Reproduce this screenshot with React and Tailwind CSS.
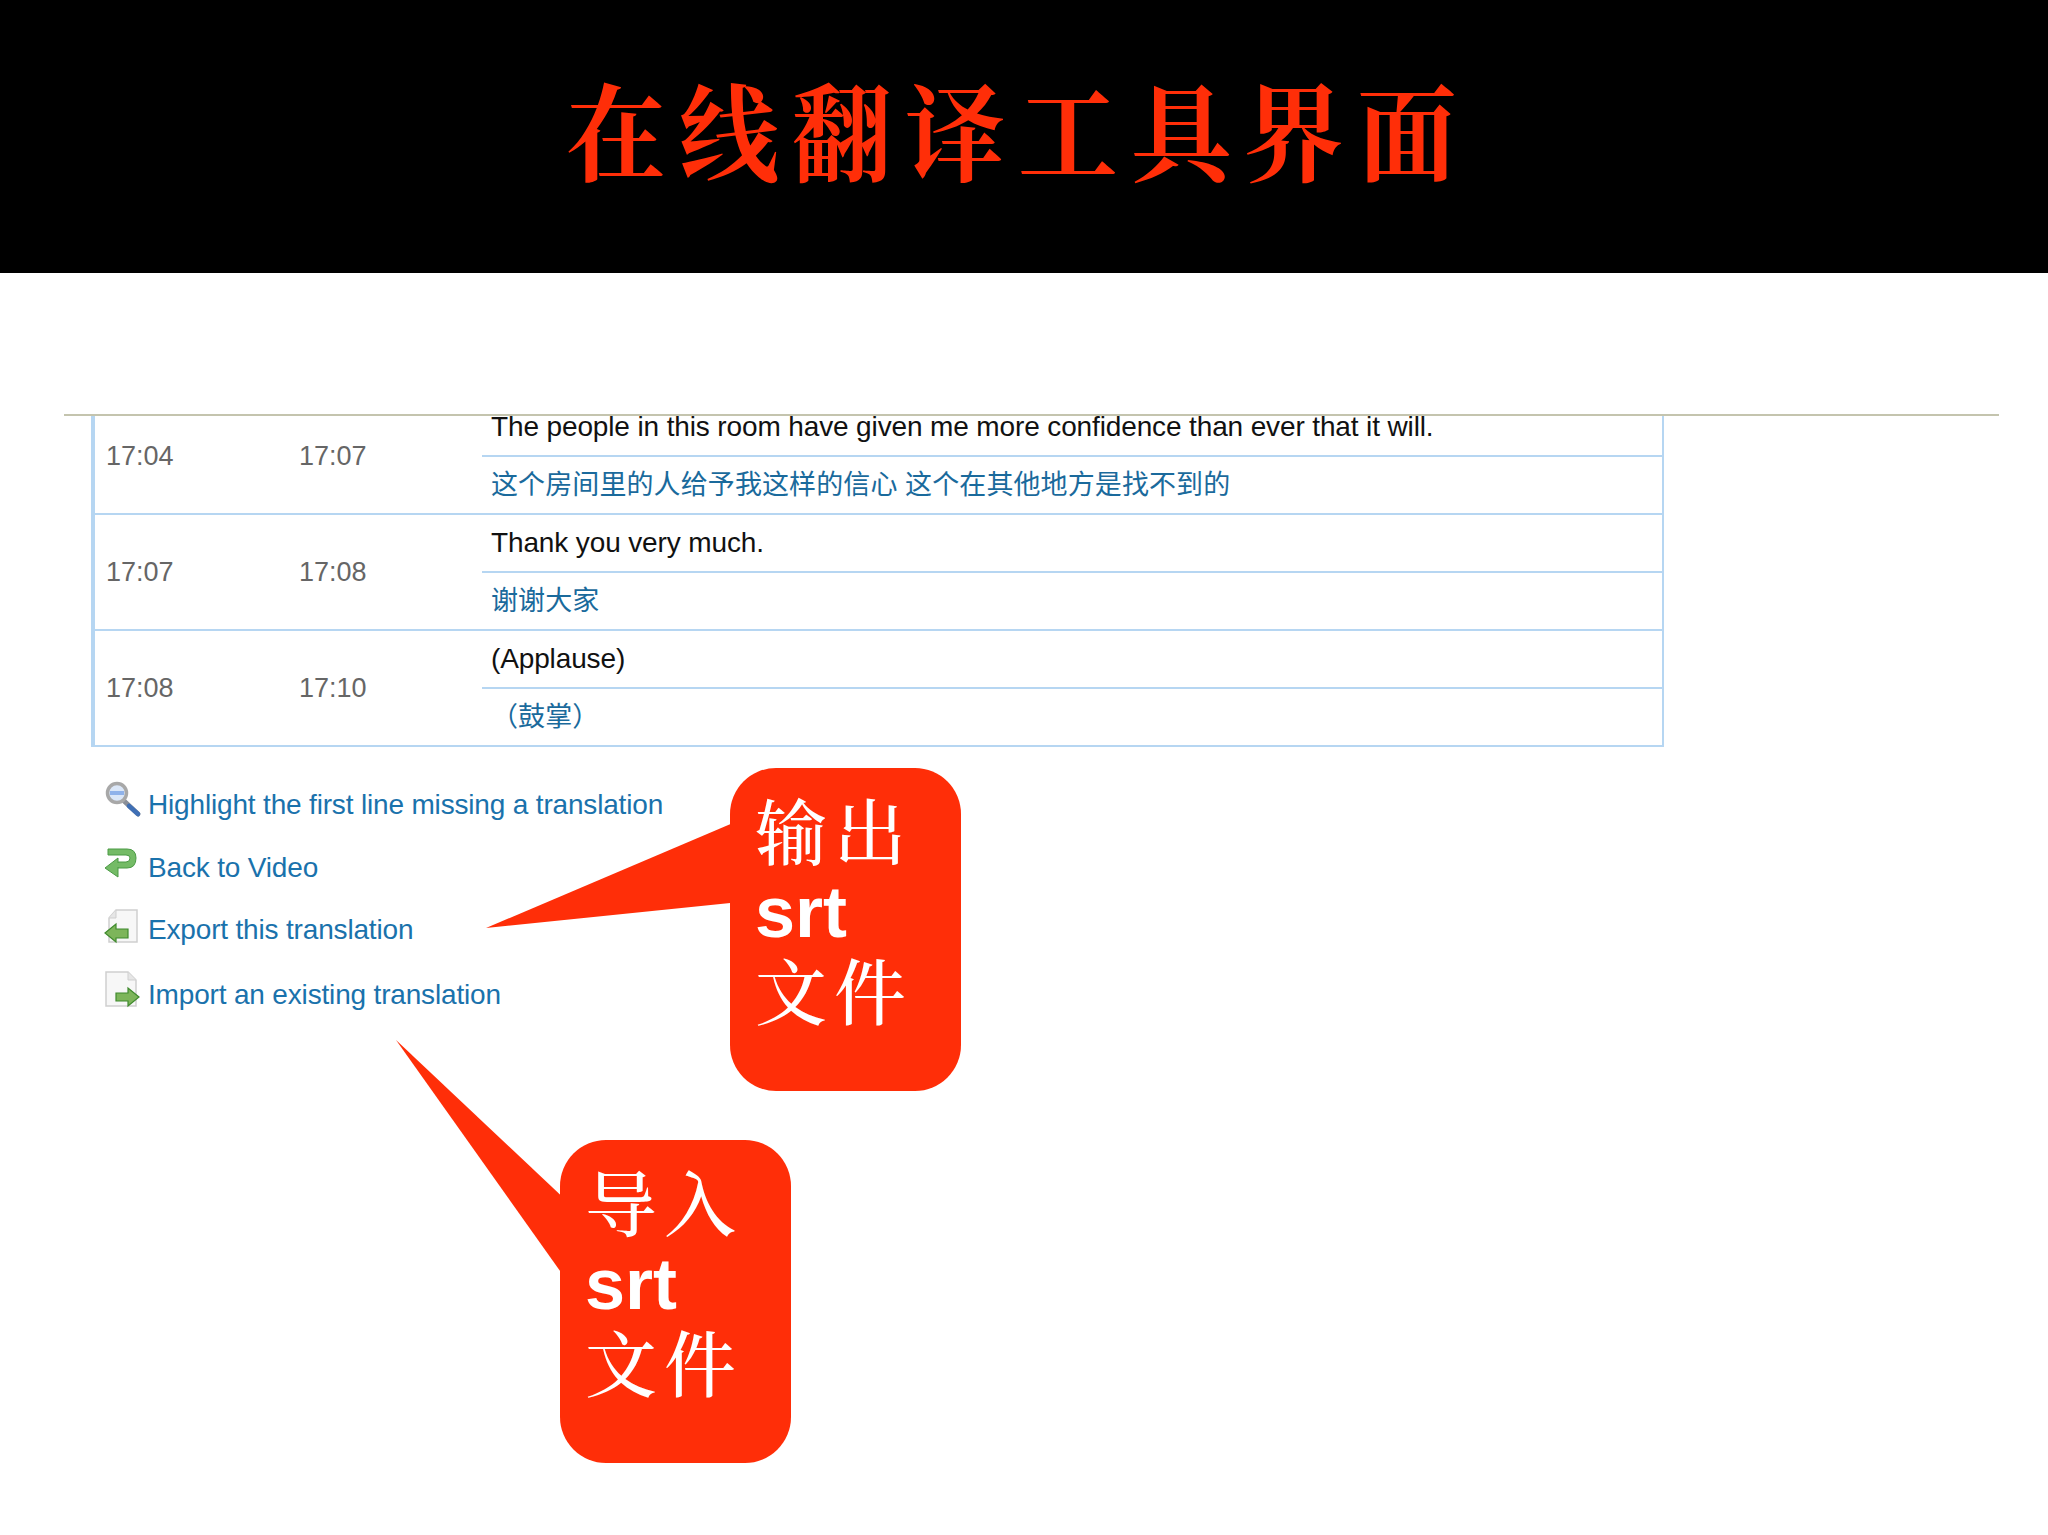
const sans = { fontFamily: '"Liberation Sans", Arial, sans-serif' };
const cjk = '"Liberation Sans", "Noto Sans CJK SC", sans-serif';
const serif = '"Noto Serif CJK SC", "Noto Sans CJK SC", serif';

const rows = [
  { a: "17:04", b: "17:07", en: "The people in this room have given me more confidence than ever that it will.", zh: "这个房间里的人给予我这样的信心 这个在其他地方是找不到的", h: "h-[116px]", line: true },
  { a: "17:07", b: "17:08", en: "Thank you very much.", zh: "谢谢大家", h: "h-[116px]", line: true },
  { a: "17:08", b: "17:10", en: "(Applause)", zh: "（鼓掌）", h: "h-[114px]", line: false },
];

function IconSearch() {
  return (
    <svg width="38" height="38" viewBox="0 0 38 38">
      <line x1="19" y1="19" x2="34" y2="33" stroke="#8a8f98" strokeWidth="5" strokeLinecap="round" />
      <line x1="25" y1="25" x2="34" y2="33" stroke="#3f6fb5" strokeWidth="4.5" strokeLinecap="round" />
      <circle cx="13" cy="12" r="9.5" fill="#dbe7f8" stroke="#a8a8a8" strokeWidth="3.5" />
      <rect x="6" y="10" width="14" height="4" fill="#8fb2ea" />
    </svg>
  );
}
function IconBack() {
  return (
    <svg width="34" height="34" viewBox="0 0 34 34">
      <path d="M4 1 H23 Q32 1 32 10 Q32 20 23 20 H13 V14 H22 Q26 14 26 10 Q26 7 22 7 H4 Z" fill="#74bb66" stroke="#4b9a45" strokeWidth="1" />
      <path d="M1 20 L14 10 V29 Z" fill="#74bb66" stroke="#4b9a45" strokeWidth="1" />
      <rect x="12" y="15" width="8" height="4" fill="#74bb66" />
    </svg>
  );
}
function IconExport() {
  return (
    <svg width="36" height="38" viewBox="0 0 36 38">
      <path d="M12 2 H33 V34 H5 V10 Z" fill="#f7f7f7" stroke="#cfcfcf" strokeWidth="1.5" />
      <path d="M12 2 V10 H5" fill="#e6e6e6" stroke="#cfcfcf" strokeWidth="1" />
      <path d="M1 25 L12 16 V21 H24 V30 H12 V34 Z" fill="#7db55a" stroke="#3f8a2d" strokeWidth="1.2" />
    </svg>
  );
}
function IconImport() {
  return (
    <svg width="36" height="40" viewBox="0 0 36 40">
      <path d="M2 2 H24 L32 10 V36 H2 Z" fill="#f7f7f7" stroke="#cfcfcf" strokeWidth="1.5" />
      <path d="M24 2 V10 H32" fill="#e6e6e6" stroke="#cfcfcf" strokeWidth="1" />
      <path d="M35 27 L24 18 V23 H12 V31 H24 V36 Z" fill="#7db55a" stroke="#3f8a2d" strokeWidth="1.2" />
    </svg>
  );
}

const links = [
  { icon: <IconSearch />, label: "Highlight the first line missing a translation", box: "h-[64px]", iconBox: "-translate-y-[5px]" },
  { icon: <IconBack />, label: "Back to Video", box: "h-[62px]", iconBox: "-translate-y-[3px]" },
  { icon: <IconExport />, label: "Export this translation", box: "h-[62px]", iconBox: "-translate-y-[3px]" },
  { icon: <IconImport />, label: "Import an existing translation", box: "h-[68px]", iconBox: "-translate-y-[5px]" },
];

function Callout({ box, lines }) {
  return (
    <div className={"absolute w-[231px] h-[323px] bg-[#ff2e08] rounded-[46px] pl-[25px] pt-[20px] text-white " + box}>
      {lines.map((l, i) =>
        i === 1 ? (
          <div key={i} className="h-[80px] leading-[80px] text-[72px] font-bold translate-y-[4px]" style={sans}>{l}</div>
        ) : (
          <div key={i} className="h-[80px] leading-[80px] text-[72px] font-medium tracking-[7px] whitespace-nowrap" style={{ fontFamily: serif }}>{l}</div>
        )
      )}
    </div>
  );
}

export default function App() {
  return (
    <div className="relative w-[2048px] h-[1535px] overflow-hidden bg-white" style={sans}>
      <header className="h-[273px] bg-black flex items-start justify-center">
        <h1
          className="mt-[55px] -ml-[12px] text-[100px] leading-[136px] font-bold tracking-[13px] text-[#ff2e08] whitespace-nowrap scale-y-[1.06] origin-top"
          style={{ fontFamily: serif }}
        >
          在线翻译工具界面
        </h1>
      </header>

      <div className="mt-[141px] ml-[64px] w-[1935px] h-[2px] bg-[#c4c4ae]" />

      <div className="ml-[91px] w-[1573px] h-[331px] overflow-hidden flex flex-col justify-end border-l-[4px] border-r-2 border-b-2 border-[#b6d6f2]">
        {rows.map((r, i) => (
          <div key={i} className={"flex shrink-0 " + r.h + " " + (r.line ? "border-b-2 border-[#b6d6f2]" : "")}>
            <div className="w-[204px] pl-[11px] flex items-center text-[27px] text-[#666]">{r.a}</div>
            <div className="w-[183px] flex items-center text-[27px] text-[#666]">{r.b}</div>
            <div className="flex-1 flex flex-col">
              <div className="flex-1 flex items-center pl-[9px] border-b-2 border-[#b6d6f2] text-[28px] tracking-[-0.13px] text-[#111] whitespace-nowrap">{r.en}</div>
              <div className="flex-1 flex items-center pl-[9px] text-[27px] tracking-[0.1px] text-[#1a6a9c] whitespace-nowrap" style={{ fontFamily: cjk }}>{r.zh}</div>
            </div>
          </div>
        ))}
      </div>

      <ul className="mt-[26px] ml-[104px]">
        {links.map((l, i) => (
          <li key={i} className={"flex items-center " + l.box}>
            <span className={"w-[44px] shrink-0 " + l.iconBox}>{l.icon}</span>
            <a className="text-[28px] tracking-[-0.17px] text-[#1a72ac] whitespace-nowrap">{l.label}</a>
          </li>
        ))}
      </ul>

      <svg className="absolute left-0 top-0 pointer-events-none" width="2048" height="1535">
        <polygon points="486,928 740,820 740,902" fill="#ff2e08" />
        <polygon points="396,1040 570,1204 570,1285" fill="#ff2e08" />
      </svg>
      <Callout box="left-[730px] top-[768px]" lines={["输出", "srt", "文件"]} />
      <Callout box="left-[560px] top-[1140px]" lines={["导入", "srt", "文件"]} />
    </div>
  );
}
